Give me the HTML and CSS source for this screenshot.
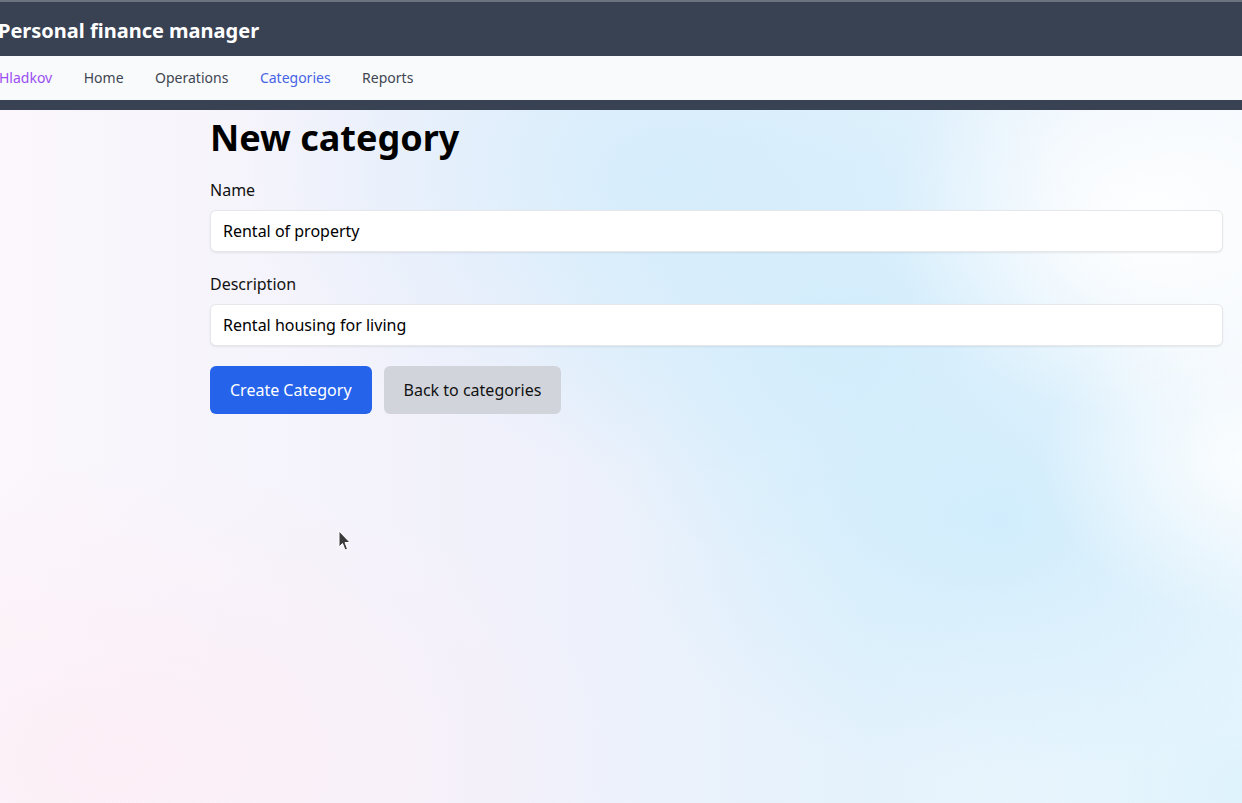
FILE: index.html
```html
<!DOCTYPE html>
<html lang="en">
<head>
<meta charset="utf-8">
<title>New category</title>
<link rel="stylesheet" href="styles.css">
</head>
<body>
<header class="topbar">
  <div class="brand">Personal finance manager</div>
</header>
<nav class="nav">
  <a class="nav-link user" href="#">Hladkov</a>
  <a class="nav-link" href="#">Home</a>
  <a class="nav-link" href="#">Operations</a>
  <a class="nav-link active" href="#">Categories</a>
  <a class="nav-link" href="#">Reports</a>
</nav>
<div class="strip"></div>
<main class="main">
  <h1 class="title">New category</h1>
  <form class="form">
    <div class="field">
      <label class="label" for="name">Name</label>
      <input class="input" id="name" type="text" value="Rental of property">
    </div>
    <div class="field">
      <label class="label" for="desc">Description</label>
      <input class="input" id="desc" type="text" value="Rental housing for living">
    </div>
    <div class="actions">
      <button class="btn btn-primary" type="button">Create Category</button>
      <button class="btn btn-secondary" type="button">Back to categories</button>
    </div>
  </form>
  <svg class="cursor" width="14" height="22" viewBox="0 0 14 22">
    <path d="M1 1 L1 17 L4.5 13.5 L7 20 L9.5 19 L7 12.5 L12 12.5 Z" fill="#3a3a3a" stroke="#ffffff" stroke-width="1"/>
  </svg>
</main>
</body>
</html>
```

FILE: styles.css
```css
* { box-sizing: border-box; }
html, body { margin: 0; padding: 0; }
body {
  font-family: "Noto Sans", "Open Sans", sans-serif;
  color: #111827;
  min-height: 803px;
  background-color: #f6f3fb;
  background-image:
    radial-gradient(ellipse 260px 200px at 1150px 220px, rgba(255,255,255,0.95), rgba(255,255,255,0) 100%),
    radial-gradient(ellipse 200px 160px at 1242px 460px, rgba(255,255,255,0.8), rgba(255,255,255,0) 100%),
    radial-gradient(ellipse 380px 260px at 1000px 520px, rgba(206,236,252,0.9), rgba(206,236,252,0) 100%),
    radial-gradient(ellipse 320px 240px at 830px 330px, rgba(208,236,252,0.8), rgba(208,236,252,0) 100%),
    radial-gradient(ellipse 420px 300px at 660px 170px, rgba(210,236,252,0.85), rgba(210,236,252,0) 100%),
    radial-gradient(ellipse 300px 300px at 1242px 790px, rgba(220,242,253,0.9), rgba(220,242,253,0) 100%),
    radial-gradient(ellipse 500px 300px at 120px 760px, rgba(253,238,246,0.9), rgba(253,238,246,0) 100%),
    linear-gradient(90deg, #fbf7fc 0%, #f1f1fb 40%, #e4f2fc 70%, #f3f8fd 100%);
}
.topbar {
  background: #394253;
  border-top: 2px solid #6b7380;
  height: 56px;
  display: flex;
  align-items: center;
}
.brand {
  color: #ffffff;
  font-weight: 700;
  font-size: 20px;
  margin-left: -2px;
  padding-top: 2px;
}
.nav {
  background: #f9fafb;
  height: 44px;
  display: flex;
  align-items: center;
  gap: 31.5px;
  padding-bottom: 1px;
}
.nav-link {
  font-size: 14px;
  color: #3f4552;
  text-decoration: none;
}
.nav-link.user { color: #9a4ff2; margin-left: -1px; }
.nav-link.active { color: #4763e6; }
.strip { height: 10px; background: #394253; }
.main {
  position: relative;
  padding: 8px 19px 40px 210px;
}
.title {
  margin: 0 0 20px;
  font-size: 36px;
  line-height: 40px;
  font-weight: 700;
  color: #000;
}
.form { display: flex; flex-direction: column; }
.field { display: flex; flex-direction: column; gap: 8px; margin-bottom: 20px; }
.label { font-size: 16px; line-height: 24px; color: #111; }
.input {
  font-family: inherit;
  font-size: 16px;
  line-height: 24px;
  padding: 8px 12px;
  height: 42px;
  border: 1px solid #e5e7eb;
  border-radius: 6px;
  background: #fff;
  color: #000;
  box-shadow: 0 1px 2px rgba(0,0,0,0.08);
  width: 100%;
}
.actions { display: flex; gap: 12px; }
.btn {
  font-family: inherit;
  font-size: 16px;
  line-height: 24px;
  padding: 12px 20px;
  border: none;
  border-radius: 6px;
}
.btn-primary { background: #2563eb; color: #fff; }
.btn-secondary { background: #d1d5db; color: #111; }
.cursor { position: absolute; left: 338px; top: 420px; }
```
